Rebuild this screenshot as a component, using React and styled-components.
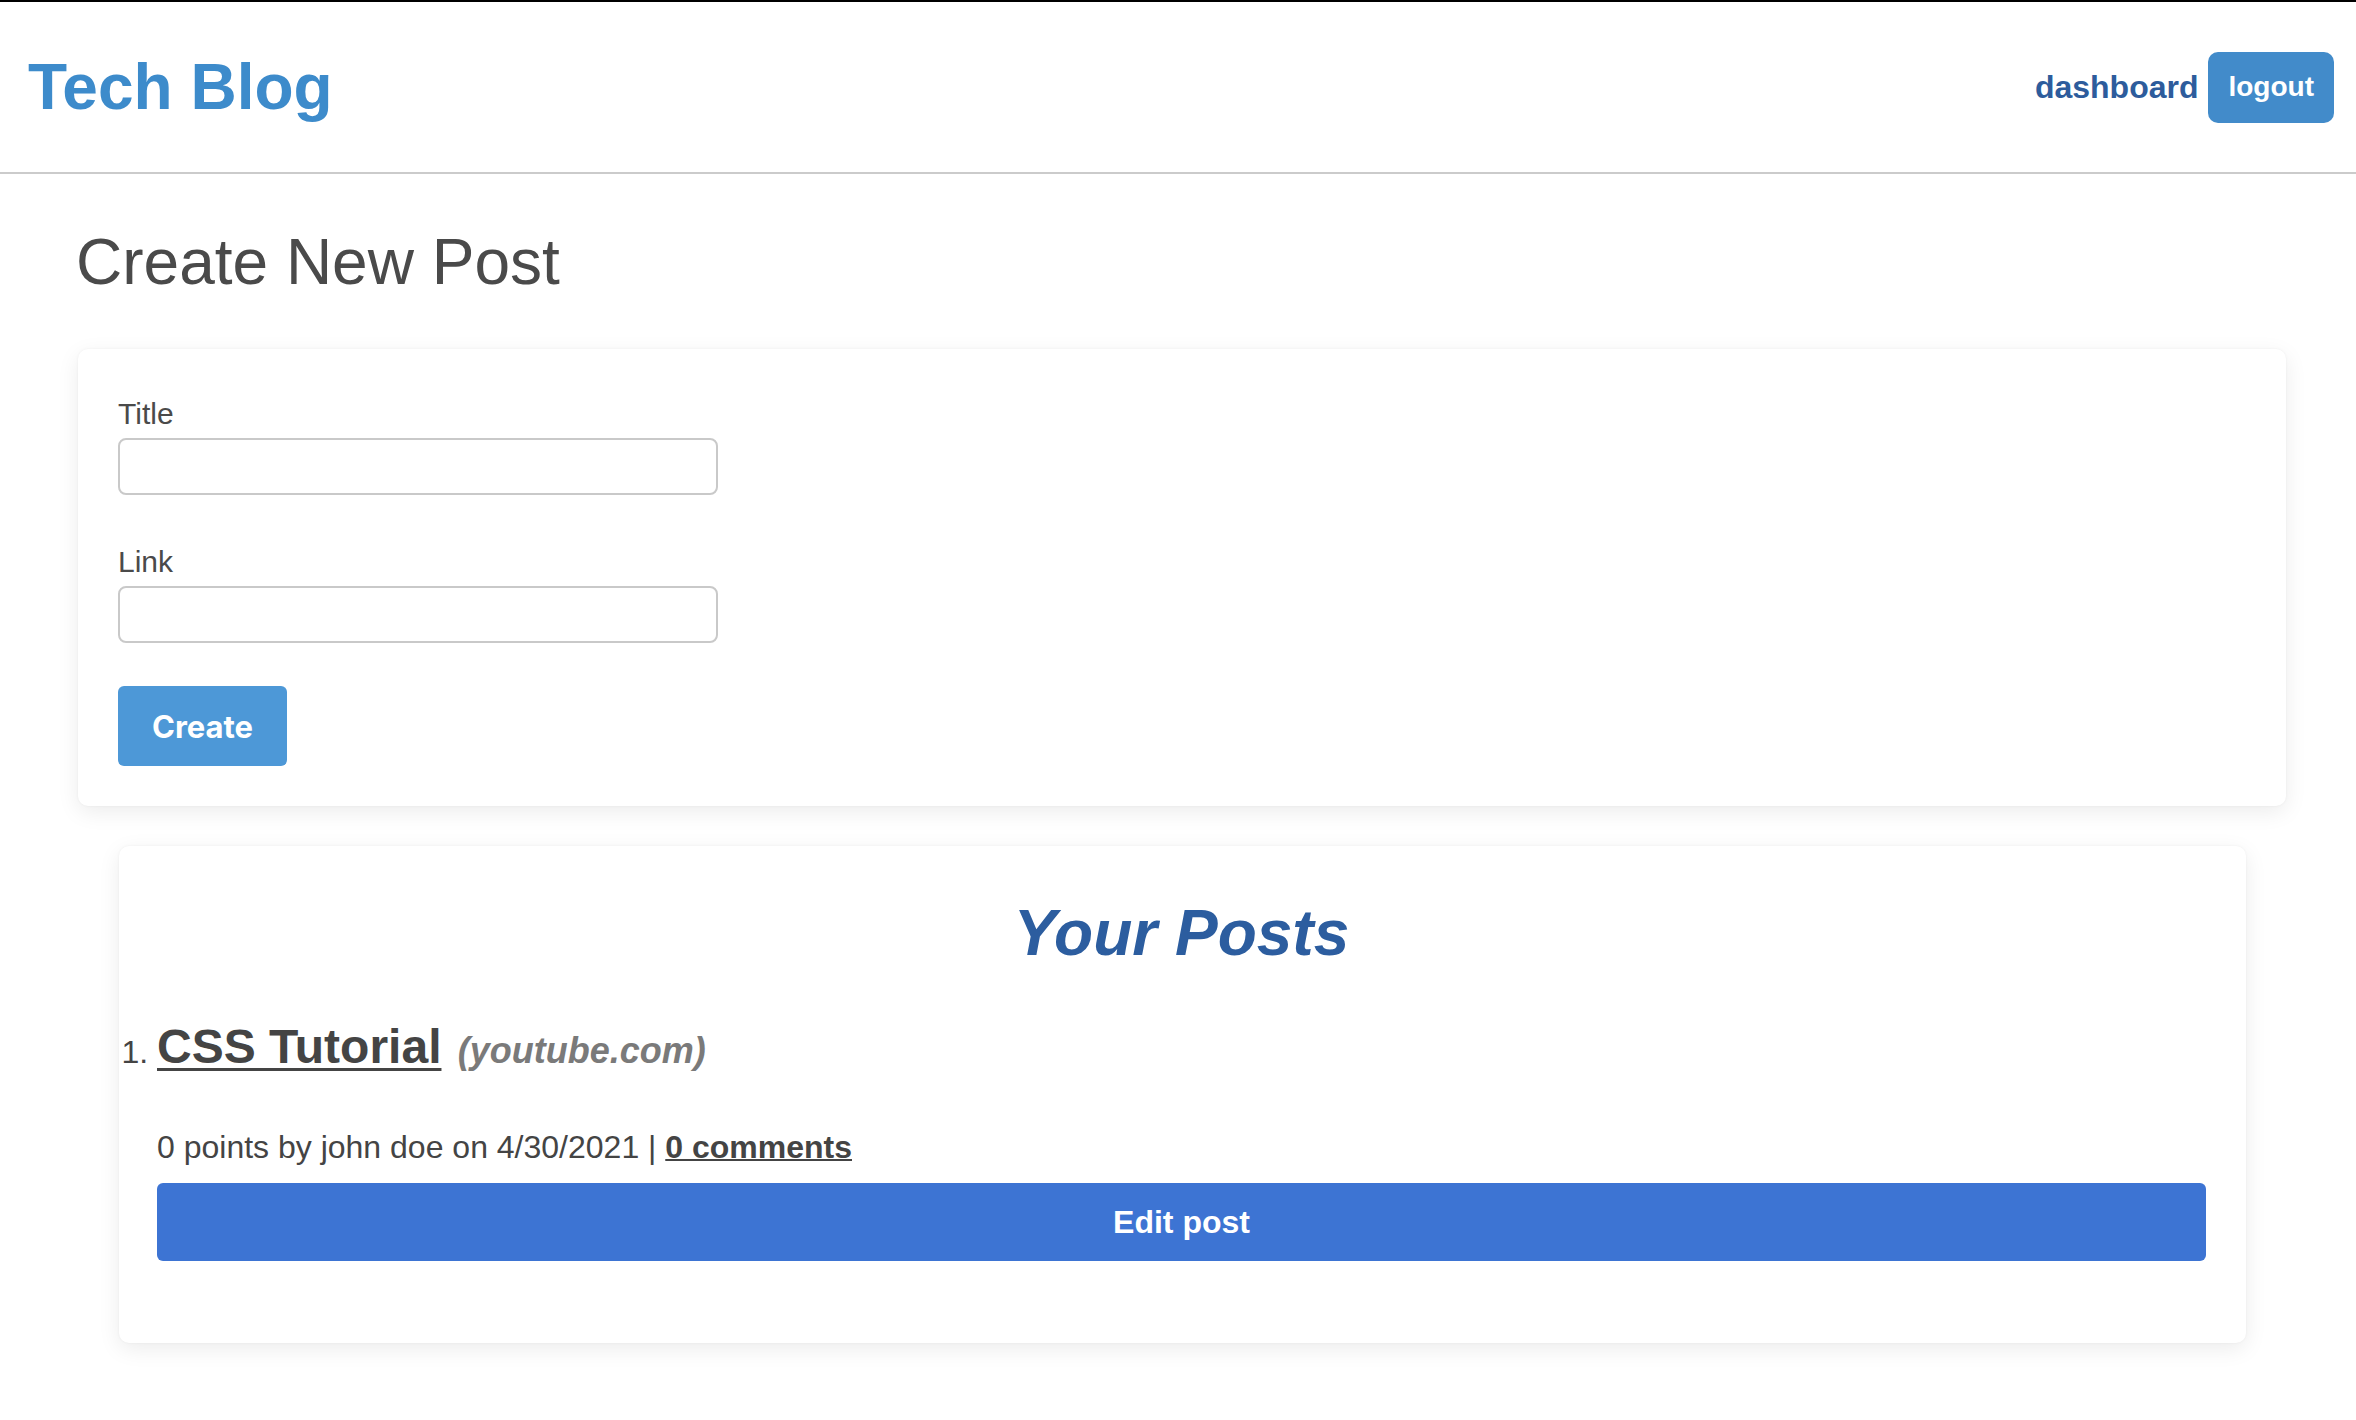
import React from "react";
import styled, { createGlobalStyle } from "styled-components";

const GlobalStyle = createGlobalStyle`
  * { box-sizing: border-box; }
  html, body { background: #ffffff; }
  body {
    margin: 0;
    border-top: 2px solid #000000;
    font-family: "Liberation Sans", Arial, Helvetica, sans-serif;
    color: #4a4a4a;
  }
`;

const Header = styled.header`
  display: flex;
  align-items: center;
  justify-content: space-between;
  height: 172px;
  padding: 0 22px 0 28px;
  border-bottom: 2px solid #cbcbcb;
`;

const Logo = styled.h1`
  margin: 0;
  font-size: 64px;
  line-height: 1;
  font-weight: 700;
  color: #3d8bcb;
`;

const Nav = styled.nav`
  display: flex;
  align-items: center;
  gap: 10px;
`;

const NavLink = styled.a`
  font-size: 32px;
  font-weight: 700;
  color: #2d5c9c;
  text-decoration: none;
`;

const LogoutButton = styled.button`
  height: 71px;
  padding: 0 20px;
  border: none;
  border-radius: 10px;
  background: #428bca;
  color: #ffffff;
  font-family: "Liberation Sans", Arial, sans-serif;
  font-size: 28px;
  font-weight: 700;
`;

const Main = styled.main`
  padding: 0 70px 60px 78px;
`;

const PageTitle = styled.h2`
  margin: 52px 0 51px -2px;
  font-size: 64px;
  line-height: 72px;
  font-weight: 400;
  color: #4a4a4a;
`;

const Card = styled.section`
  background: #ffffff;
  border-radius: 10px;
  box-shadow: 0 6px 22px rgba(0, 0, 0, 0.08), 0 0 3px rgba(0, 0, 0, 0.05);
`;

const FormCard = styled(Card)`
  padding: 47px 40px 40px;
`;

const Field = styled.div`
  margin-bottom: ${(p) => p.$gap}px;
`;

const Label = styled.label`
  display: block;
  margin-bottom: 6px;
  font-size: 30px;
  line-height: 36px;
  color: #4a4a4a;
`;

const Input = styled.input`
  display: block;
  width: 600px;
  height: ${(p) => p.$h}px;
  border: 2px solid #c9c9c9;
  border-radius: 8px;
  background: #ffffff;
  font-size: 28px;
  padding: 0 12px;
`;

const CreateButton = styled.button`
  height: 80px;
  padding: 0 34px;
  border: none;
  border-radius: 6px;
  background: #4d98d7;
  color: #ffffff;
  font-family: Inter, "Liberation Sans", sans-serif;
  font-size: 31px;
  font-weight: 700;
`;

const PostsCard = styled(Card)`
  margin: 40px 40px 0 41px;
  padding: 51px 40px 82px 38px;
`;

const PostsHeading = styled.h2`
  margin: 0 0 50px;
  text-align: center;
  font-size: 64px;
  line-height: 72px;
  font-weight: 700;
  font-style: italic;
  color: #2c5d9f;
`;

const PostList = styled.ol`
  margin: 0;
  padding: 0;
  font-size: 32px;
  color: #444444;
`;

const PostItem = styled.li``;

const TitleRow = styled.div`
  font-size: 48px;
  line-height: 56px;
`;

const PostLink = styled.a`
  font-weight: 700;
  color: #444444;
  text-decoration: underline;
  text-decoration-thickness: 3px;
  text-underline-offset: 5px;
`;

const Domain = styled.span`
  margin-left: 3px;
  font-size: 36px;
  line-height: 1;
  font-weight: 700;
  font-style: italic;
  color: #7a7a7a;
`;

const Meta = styled.p`
  margin: 52px 0 0;
  font-size: 32px;
  line-height: 40px;
  color: #444444;
`;

const CommentsLink = styled.a`
  font-weight: 700;
  color: #444444;
  text-decoration: underline;
  text-decoration-thickness: 2px;
`;

const EditButton = styled.button`
  display: block;
  width: 100%;
  height: 78px;
  margin-top: 16px;
  border: none;
  border-radius: 6px;
  background: #3d74d3;
  color: #ffffff;
  font-family: "Liberation Sans", Arial, sans-serif;
  font-size: 32px;
  font-weight: 700;
`;

export default function App() {
  return (
    <>
      <GlobalStyle />
      <Header>
        <Logo>Tech Blog</Logo>
        <Nav>
          <NavLink href="#">dashboard</NavLink>
          <LogoutButton>logout</LogoutButton>
        </Nav>
      </Header>
      <Main>
        <PageTitle>Create New Post</PageTitle>
        <FormCard>
          <Field $gap={49}>
            <Label htmlFor="title">Title</Label>
            <Input id="title" $h={57} />
          </Field>
          <Field $gap={43}>
            <Label htmlFor="link">Link</Label>
            <Input id="link" $h={57} />
          </Field>
          <CreateButton>Create</CreateButton>
        </FormCard>
        <PostsCard>
          <PostsHeading>Your Posts</PostsHeading>
          <PostList>
            <PostItem>
              <TitleRow>
                <PostLink href="#">CSS Tutorial</PostLink>{" "}
                <Domain>(youtube.com)</Domain>
              </TitleRow>
              <Meta>
                0 points by john doe on 4/30/2021 | <CommentsLink href="#">0 comments</CommentsLink>
              </Meta>
              <EditButton>Edit post</EditButton>
            </PostItem>
          </PostList>
        </PostsCard>
      </Main>
    </>
  );
}
